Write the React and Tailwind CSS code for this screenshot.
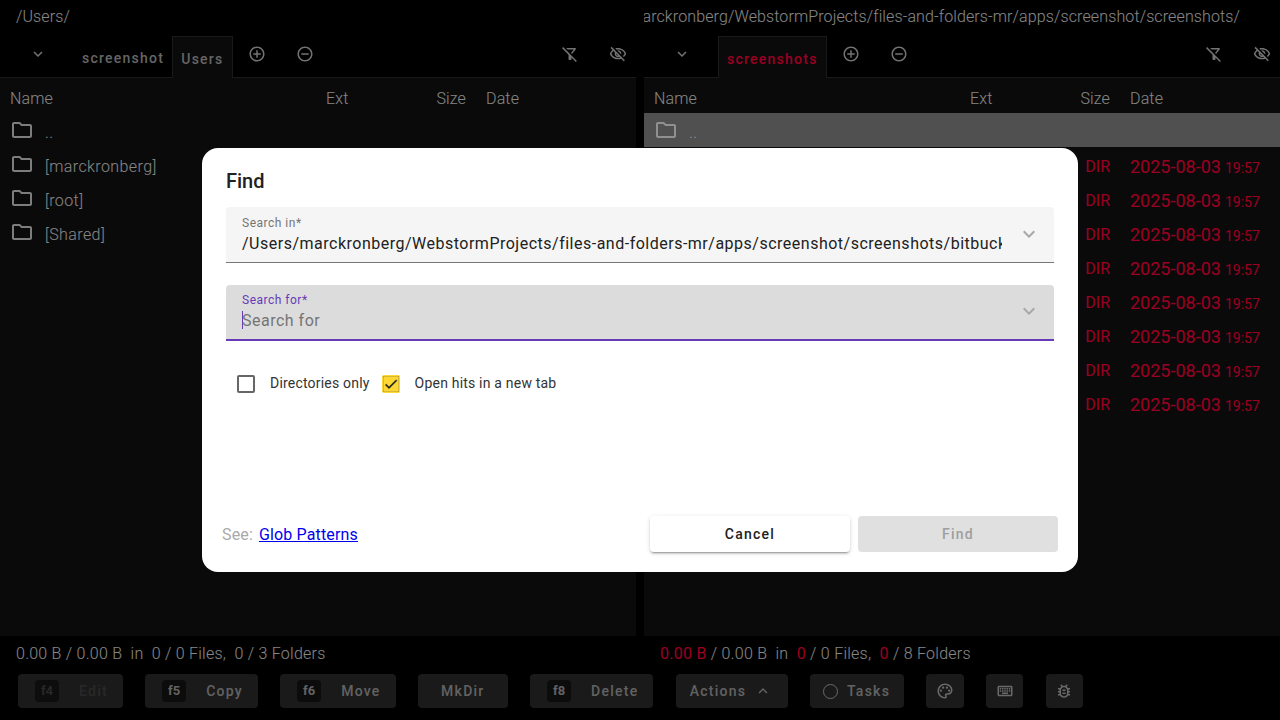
import React from 'react';
import {
  MdAddCircleOutline,
  MdRemoveCircleOutline,
  MdExpandMore,
  MdExpandLess,
  MdOutlineFilterAltOff,
  MdOutlineVisibilityOff,
  MdOutlineFolder,
  MdOutlinePalette,
  MdOutlineKeyboard,
  MdOutlineBugReport,
  MdCheck,
} from 'react-icons/md';

const FONT = { fontFamily: 'Roboto, sans-serif' };

const Row = ({ name, active, selected, dir }) => (
  <div className={`grid grid-cols-[316px_110px_30px_1fr] pl-[10px] h-[34px] items-center ${selected ? 'bg-[#858585]' : ''}`}>
    <div className="flex items-center gap-[11px] min-w-0">
      <MdOutlineFolder className={`w-6 h-6 -mt-[1px] ${selected ? 'text-[#f0f0f0]' : 'text-[#d0d0d0]'}`} />
      <span className={`text-base font-light tracking-[0.4px] ${selected ? 'text-[#f0f0f0]' : 'text-[#e0e0e0]'} pt-[6px]`}>{name}</span>
    </div>
    <div />
    <div className={`text-base text-right pt-[6px] ${active ? 'text-[#ff003c]' : ''}`}>{dir ? 'DIR' : ''}</div>
    <div className="pl-5 pt-[5px] text-[18px] leading-6 text-[#ff003c] whitespace-nowrap">
      {dir ? '2025-08-03' : ''}
      {dir ? <span className="text-sm ml-[4px]">19:57</span> : null}
    </div>
  </div>
);

const Panel = ({ path, tabs, rows, active, right }) => (
  <div className="w-[636px] flex flex-col min-h-0">
    <div className={`h-9 pb-[2px] flex items-center overflow-hidden whitespace-nowrap text-base font-light tracking-[0.12px] text-[#e0e0e0] ${right ? 'justify-end pr-10' : 'pl-4'}`}>
      {path}
    </div>
    <div className="h-[42px] flex items-stretch relative">
      <div className="w-[74px] flex items-center pl-[29px] pb-[6px] text-[#c0c0c0]">
        <MdExpandMore className="w-[18px] h-[18px]" />
      </div>
      {tabs.map((t) => (
        <div
          key={t.label}
          className={`flex items-center pt-[2px] px-2 text-sm font-medium tracking-[1.25px] ${t.selected ? 'bg-[#111] border border-b-0 border-[#2a2a2a]' : ''} ${t.red ? 'text-[#ff003c]' : 'text-[#a8a8a8]'}`}
        >
          {t.label}
        </div>
      ))}
      <div className="w-12 flex items-center justify-center pb-[6px] text-[#c0c0c0]">
        <MdAddCircleOutline className="w-[18px] h-[18px]" />
      </div>
      <div className="w-12 flex items-center justify-center pb-[6px] text-[#c0c0c0]">
        <MdRemoveCircleOutline className="w-[18px] h-[18px]" />
      </div>
      <div className="ml-auto flex gap-3 pb-[6px] text-[#c0c0c0]">
        <div className="w-9 flex items-center justify-center">
          <MdOutlineFilterAltOff className="w-[18px] h-[18px]" />
        </div>
        <div className="w-9 flex items-center justify-center">
          <MdOutlineVisibilityOff className="w-[18px] h-[18px]" />
        </div>
      </div>
    </div>
    <div className="flex-1 bg-[#111] border-t border-[#2a2a2a] -mt-px text-[#c4c4c4] min-h-0">
      <div className="grid grid-cols-[316px_110px_30px_1fr] pl-[10px] h-[35px] items-center pt-[7px] text-base font-light tracking-[0.15px] text-[#e0e0e0]">
        <div>Name</div>
        <div>Ext</div>
        <div className="text-right">Size</div>
        <div className="pl-5">Date</div>
      </div>
      {rows.map((r, i) => (
        <Row key={i} name={r.name} selected={r.selected} dir={r.dir} active={active} />
      ))}
    </div>
  </div>
);

const KeyButton = ({ k, label, disabled }) => (
  <div className={`h-[34px] flex items-center pl-[17px] pr-[15px] rounded bg-[#2c2c2c] text-sm font-medium tracking-[1.25px] ${disabled ? 'bg-[#1a1a1a] text-[#444]' : 'text-[#a4a4a4]'}`}>
    <span className={`w-6 h-[22px] mr-5 flex items-center justify-center rounded text-[13px] tracking-normal font-bold ${disabled ? 'bg-[#161616]' : 'bg-[#141414]'}`}>{k}</span>
    {label}
  </div>
);

const Field = ({ label, focused, children }) => (
  <div className={`h-14 flex items-center rounded-t pl-4 pr-[13px] ${focused ? 'bg-[#dcdcdc] border-b-2 border-[#673ab7]' : 'bg-[#f5f5f5] border-b border-[#777]'}`}>
    <div className="w-[760px] overflow-hidden whitespace-nowrap pt-[2px]">
      <div className={`text-xs tracking-[0.5px] leading-4 -mt-[1px] ${focused ? 'text-[#673ab7]' : 'text-[#757575]'}`}>{label}</div>
      <div className="text-base tracking-[0.5px] leading-6 pt-[1px] text-[#212121]">{children}</div>
    </div>
    <MdExpandMore className="w-6 h-6 ml-auto -mt-[2px] text-[#a8a8a8]" />
  </div>
);

const App = () => {
  const leftRows = [
    { name: '..' },
    { name: '[marckronberg]' },
    { name: '[root]' },
    { name: '[Shared]' },
  ];
  const rightRows = [
    { name: '..', selected: true },
    ...Array.from({ length: 8 }, () => ({ name: '', dir: true })),
  ];

  return (
    <div style={FONT} className="relative w-full h-screen bg-black overflow-hidden flex flex-col">
      <div className="h-[636px] flex gap-2">
        <Panel
          path="/Users/"
          tabs={[{ label: 'screenshot' }, { label: 'Users', selected: true }]}
          rows={leftRows}
        />
        <Panel
          right
          active
          path="/Users/marckronberg/WebstormProjects/files-and-folders-mr/apps/screenshot/screenshots/"
          tabs={[{ label: 'screenshots', selected: true, red: true }]}
          rows={rightRows}
        />
      </div>

      <div className="h-9 flex gap-2 text-base font-light tracking-[0.25px] text-[#e0e0e0] items-center">
        <div className="w-[636px] pl-4 whitespace-pre">0.00 B / 0.00 B  in  0 / 0 Files,  0 / 3 Folders</div>
        <div className="w-[636px] pl-4 whitespace-pre">
          <span className="text-[#ff003c] font-normal">0.00 B</span> / 0.00 B  in  <span className="text-[#ff003c] font-normal">0</span> / 0 Files,  <span className="text-[#ff003c] font-normal">0</span> / 8 Folders
        </div>
      </div>

      <div className="flex gap-[22.25px] pl-[18px] mt-[2px]">
        <KeyButton k="f4" label="Edit" disabled />
        <KeyButton k="f5" label="Copy" />
        <KeyButton k="f6" label="Move" />
        <div className="h-[34px] w-[90px] flex items-center justify-center rounded bg-[#2c2c2c] text-sm font-medium tracking-[1.25px] text-[#a4a4a4]">MkDir</div>
        <KeyButton k="f8" label="Delete" />
        <div className="h-[34px] w-[112px] flex items-center pl-[14px] gap-2 rounded bg-[#2c2c2c] text-sm font-medium tracking-[1.25px] text-[#a4a4a4]">
          Actions
          <MdExpandLess className="w-[18px] h-[18px]" />
        </div>
        <div className="h-[34px] w-[94px] flex items-center pl-[13px] gap-[9px] rounded bg-[#2c2c2c] text-sm font-medium tracking-[1.25px] text-[#a4a4a4]">
          <span className="w-[15px] h-[15px] rounded-full border-[1.5px] border-[#b0b0b0]" />
          Tasks
        </div>
        <div className="h-[34px] w-[38px] flex items-center justify-center rounded bg-[#2c2c2c] text-[#b0b0b0]">
          <MdOutlinePalette className="w-[18px] h-[18px]" />
        </div>
        <div className="h-[34px] w-[37px] flex items-center justify-center rounded bg-[#2c2c2c] text-[#b0b0b0]">
          <MdOutlineKeyboard className="w-[18px] h-[18px]" />
        </div>
        <div className="h-[34px] w-[37px] flex items-center justify-center rounded bg-[#2c2c2c] text-[#b0b0b0]">
          <MdOutlineBugReport className="w-[18px] h-[18px]" />
        </div>
      </div>

      {/* dialog and its backdrop */}
      <div className="absolute inset-0 bg-black/40 flex items-center justify-center">
        <div className="w-[876px] h-[424px] bg-white rounded-2xl flex flex-col">
          <div className="pl-6 pt-[20px] h-[59px] text-xl font-medium leading-[26px] text-[#212121]">Find</div>
          <div className="mx-6 flex flex-col gap-[22px]">
            <Field label="Search in*">
              /Users/marckronberg/WebstormProjects/files-and-folders-mr/apps/screenshot/screenshots/bitbucket
            </Field>
            <Field label="Search for*" focused>
              <span className="inline-block w-px h-[18px] -mr-px bg-[#673ab7] align-[-3px]" />
              <span className="text-[#757575]">Search for</span>
            </Field>
          </div>
          <div className="flex items-center pl-[35px] mt-[32px] text-sm tracking-[0.2px] text-[#333]">
            <span className="w-[18px] h-[18px] rounded-[2px] border-2 border-[#666] mt-[2px]" />
            <span className="ml-[15px]">Directories only</span>
            <span className="ml-3 w-[18px] h-[18px] rounded-[2px] bg-[#fdd835] flex items-center justify-center mt-[2px]">
              <MdCheck className="w-4 h-4 text-[#222] [stroke-width:0.5px]" />
            </span>
            <span className="ml-[15px]">Open hits in a new tab</span>
          </div>
          <div className="mt-auto mb-5 pl-5 pr-5 flex items-center">
            <span className="text-base tracking-[0.15px] pt-[1px] text-[#aaa]">See: </span>
            <a className="ml-[6px] text-base tracking-[0.15px] pt-[1px] text-[#0000ee] underline">Glob Patterns</a>
            <div className="ml-auto flex gap-2">
              <div className="w-[200px] h-9 flex items-center justify-center rounded bg-white shadow-[0_3px_1px_-2px_rgba(0,0,0,0.2),0_2px_2px_0_rgba(0,0,0,0.14),0_1px_5px_0_rgba(0,0,0,0.12)] text-sm font-medium tracking-[1.25px] text-[#212121]">Cancel</div>
              <div className="w-[200px] h-9 flex items-center justify-center rounded bg-[#e0e0e0] text-sm font-medium tracking-[1.25px] text-[#9e9e9e]">Find</div>
            </div>
          </div>
        </div>
      </div>
    </div>
  );
};

export default App;
